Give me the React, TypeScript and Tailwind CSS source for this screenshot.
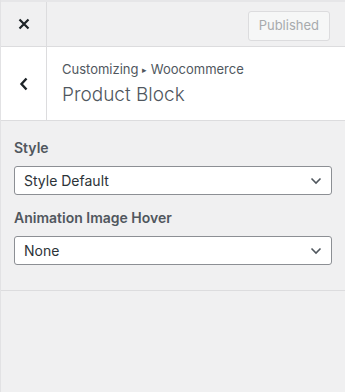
export default function App() {
  return (
    <div
      className="w-[345px] h-[392px] bg-[#f0f0f1] border-l border-[#e2e2e4] flex flex-col text-[#50575e]"
      style={{ fontFamily: 'Inter, "Noto Sans", sans-serif' }}
    >
      <div className="h-[47px] flex border-t-2 border-t-[#e6e6e8] border-b border-b-[#dcdcde] shrink-0">
        <button className="w-[46px] h-full flex items-center justify-center border-r border-[#dcdcde] text-[#1d2327]">
          <svg width="12" height="12" viewBox="0 0 12 12">
            <path d="M1.5 1.5l9 9M10.5 1.5l-9 9" stroke="currentColor" strokeWidth="2.2" />
          </svg>
        </button>
        <div className="flex-1 flex items-center justify-end pr-[15px] pt-[4px]">
          <div className="h-[30px] px-[10px] flex items-center rounded-[3px] border border-[#dcdcde] bg-[#f6f7f7] text-[#a7aaad] text-[13px]">
            Published
          </div>
        </div>
      </div>

      <div className="h-[74px] flex bg-white border-b border-[#dcdcde] shrink-0">
        <button className="w-[46px] h-full flex items-center justify-center border-r border-[#dcdcde] text-[#1d2327]">
          <svg width="10" height="14" viewBox="0 0 10 14">
            <path d="M7.5 1.5L2.5 7l5 5.5" fill="none" stroke="currentColor" strokeWidth="2.4" />
          </svg>
        </button>
        <div className="flex-1 flex flex-col justify-center pl-[15px] pt-[1px]">
          <div className="text-[13px] leading-[18px]">
            Customizing <span className="text-[9px] align-[1px]">▸</span> Woocommerce
          </div>
          <div className="text-[19px] leading-[28px] font-light mt-[2px]">Product Block</div>
        </div>
      </div>

      <div className="flex flex-col px-[13px] pt-[18px] pb-[25px] gap-[9px] border-b border-[#dcdcde]">
        <div className="text-[14px] font-semibold leading-[18px]">Style</div>
        <Select value="Style Default" />
        <div className="text-[14px] font-semibold leading-[18px] mt-[5px]">Animation Image Hover</div>
        <Select value="None" />
      </div>
    </div>
  )
}

function Select({ value }: { value: string }) {
  return (
    <div className="h-[29px] flex items-center justify-between rounded-[3px] border border-[#8c8f94] bg-white pl-[9px] pr-[9px] text-[14px] text-[#2c3338]">
      <span>{value}</span>
      <svg width="12" height="8" viewBox="0 0 12 8" className="text-[#50575e]">
        <path d="M1.5 1.5L6 6l4.5-4.5" fill="none" stroke="currentColor" strokeWidth="1.6" />
      </svg>
    </div>
  )
}
